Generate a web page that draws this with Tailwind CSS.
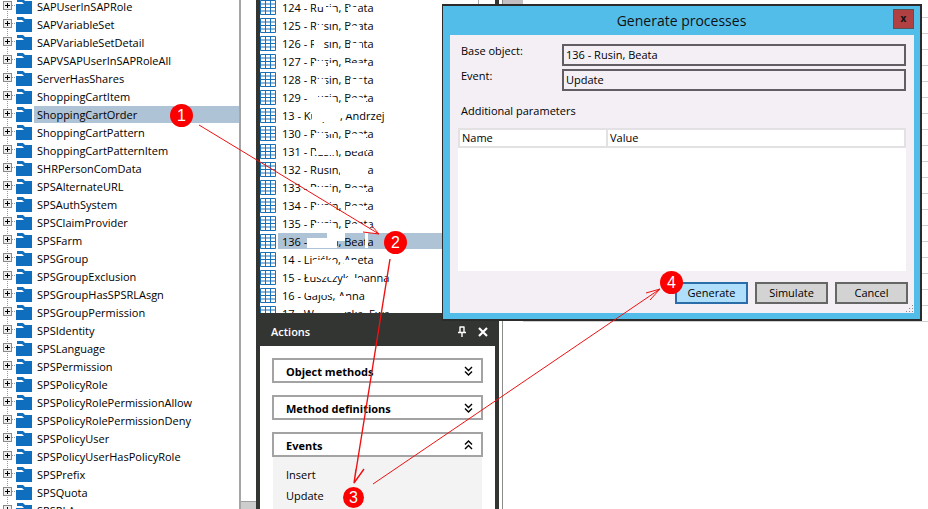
<!DOCTYPE html>
<html lang="en">
  <head>
    <meta charset="UTF-8" />
    <title>Generate processes</title>
    <script src="https://cdn.jsdelivr.net/npm/@tailwindcss/browser@4"></script>
  </head>
  <body class="bg-white overflow-hidden font-['Open_Sans',sans-serif] text-[11px] text-black">
    <div class="relative w-[928px] h-[509px] overflow-hidden flex">
      <!-- object tree -->
      <div class="w-[239px] h-full overflow-hidden bg-white shrink-0">
        <div id="tree" class="-mt-[3px]"></div>
      </div>
      <!-- tree scrollbar -->
      <div class="w-[17px] h-full shrink-0 flex flex-col justify-end border-l-2 border-[#a6a6a6]">
        <div class="h-[8px] bg-[#cdcdcd] border-t border-[#a0a0a0]"></div>
      </div>

      <!-- middle column -->
      <div class="w-[243px] h-full shrink-0 flex flex-col border-x-4 border-[#333532]">
        <div class="h-[313px] overflow-hidden bg-white">
          <div id="list" class="-mt-[2px]"></div>
        </div>
        <div class="flex-1 -mx-[4px] bg-[#333532] flex flex-col">
          <div class="h-[33px] shrink-0 flex items-center pt-[5px] pl-[15px] pr-[11px] text-white text-[11px]">
            <span class="flex-1 font-semibold">Actions</span>
            <svg width="10" height="12" viewBox="0 0 10 12" class="mr-[11px]"><path d="M2.500 1h5M3 1v5M7 1v5M1 6.500h8M5 7v4" stroke="#fff" stroke-width="1.400" fill="none" /></svg>
            <svg width="10" height="10" viewBox="0 0 10 10"><path d="M1 1l8 8M9 1l-8 8" stroke="#fff" stroke-width="2.200" /></svg>
          </div>
          <div class="flex-1 mx-[4px] bg-white px-[12px] pt-[12px] flex flex-col gap-[12px]">
            <div class="h-[25px] shrink-0 border-2 border-[#a3a3a3] flex items-center justify-between pl-[12px] pr-[8px] font-bold">
              <span class="pt-[3px]">Object methods</span>
              <svg width="9" height="10" viewBox="0 0 9 10"><path d="M1 1l3.500 3.500L8 1M1 5.500L4.500 9 8 5.500" stroke="#000" stroke-width="1.400" fill="none" /></svg>
            </div>
            <div class="h-[25px] shrink-0 border-2 border-[#a3a3a3] flex items-center justify-between pl-[12px] pr-[8px] font-bold">
              <span class="pt-[3px]">Method definitions</span>
              <svg width="9" height="10" viewBox="0 0 9 10"><path d="M1 1l3.500 3.500L8 1M1 5.500L4.500 9 8 5.500" stroke="#000" stroke-width="1.400" fill="none" /></svg>
            </div>
            <div class="flex-1 flex flex-col">
              <div class="h-[25px] shrink-0 border-2 border-[#a3a3a3] flex items-center justify-between pl-[12px] pr-[8px] font-bold">
                <span class="pt-[3px]">Events</span>
                <svg width="9" height="10" viewBox="0 0 9 10"><path d="M1 4.500L4.500 1 8 4.500M1 9l3.500-3.500L8 9" stroke="#000" stroke-width="1.400" fill="none" /></svg>
              </div>
              <div class="flex-1 mx-[1px] bg-[#f3f3f3] pl-[13px] pt-[10px] flex flex-col gap-[5px]">
                <span class="h-[16px] leading-[16px]">Insert</span>
                <span class="h-[16px] leading-[16px]">Update</span>
              </div>
            </div>
          </div>
        </div>
      </div>

      <!-- detail pane behind the dialog -->
      <div class="flex-1 h-full border-l-[1px] ml-[3px] border-[#8c8c8c] bg-white">
        <div class="flex h-[320px]">
          <div class="w-[20px] h-[4px] bg-[#c2bec2]"></div>
          <div id="grid" class="flex-1 flex flex-col pt-[2px]"></div>
        </div>
      </div>
      <div class="absolute left-[478px] top-0 w-px h-[4px] bg-[#aaaaaa]"></div>

      <!-- dialog -->
      <div class="absolute left-[442px] top-[4px] w-[480px] h-[317px] bg-[#53bdea] border border-[#2b2b2b] border-t-2 border-r-2 border-b-2 flex flex-col">
        <div class="h-[29px] shrink-0 relative flex items-center justify-center text-[14px] text-[#111]">
          <span>Generate processes</span>
          <div class="absolute right-[6px] top-[3px] w-[21px] h-[20px] bg-[#b04042] border border-[#555] flex items-center justify-center text-[10px] font-bold leading-none pb-[2px]">x</div>
        </div>
        <div class="flex-1 ml-[7px] mr-[6px] mb-[6px] bg-[#f3eff5] relative flex flex-col pl-[8px] pr-[8px] pt-[9px]">
          <div class="flex h-[22px] mb-[3px] pl-[3px]">
            <span class="w-[101px] leading-[14px]">Base object:</span>
            <div class="flex-1 border-2 border-[#625d65] pl-[2px] flex items-center">136 - Rusin, Beata</div>
          </div>
          <div class="flex h-[22px] pl-[3px]">
            <span class="w-[101px] leading-[14px]">Event:</span>
            <div class="flex-1 border-2 border-[#625d65] pl-[2px] flex items-center">Update</div>
          </div>
          <div class="pl-[3px] mt-[12px] h-[16px] leading-[16px]">Additional parameters</div>
          <div class="mt-[9px] h-[143px] bg-white flex flex-col">
            <div class="h-[20px] shrink-0 flex border-2 border-[#e3e1e4]">
              <span class="w-[148px] pl-[2px] border-r-2 border-[#e3e1e4] leading-[15px]">Name</span>
              <span class="pl-[2px] leading-[15px]">Value</span>
            </div>
          </div>
          <div class="flex justify-end gap-[7px] mt-[11px] -mr-[2px]">
            <div class="w-[73px] h-[22px] bg-[#b0dffb] border-2 border-[#2a6da8] flex items-center justify-center">Generate</div>
            <div class="w-[73px] h-[22px] bg-[#d3d3d3] border-2 border-[#666] flex items-center justify-center">Simulate</div>
            <div class="w-[73px] h-[22px] bg-[#d3d3d3] border-2 border-[#666] flex items-center justify-center">Cancel</div>
          </div>
          <svg width="8" height="8" viewBox="0 0 8 8" class="absolute right-0 bottom-0"><path d="M6 0h1v1H6zM3 3h1v1H3zM6 3h1v1H6zM0 6h1v1H0zM3 6h1v1H3zM6 6h1v1H6z" fill="#8a8a8a" /></svg>
        </div>
      </div>

      <!-- numbered callouts drawn over the screenshot -->
      <svg width="928" height="509" viewBox="0 0 928 509" class="absolute left-0 top-0 pointer-events-none">
        <g stroke="#ee1111" stroke-width="1" fill="none">
          <path d="M199 125L379 234M372 226L379 234L363 232" />
          <path d="M390 259L354 483M356 469L354 483L364 469" stroke-width="1.400" />
          <path d="M373 484L660 289M646 293L660 289L650 300" />
        </g>
      </svg>
      <div class="absolute left-[170px] top-[104px] w-[23px] h-[23px] rounded-full bg-[#fa0000] text-white flex items-center justify-center font-['Liberation_Sans',sans-serif] text-[16px]">1</div>
      <div class="absolute left-[384px] top-[231px] w-[23px] h-[23px] rounded-full bg-[#fa0000] text-white flex items-center justify-center font-['Liberation_Sans',sans-serif] text-[16px]">2</div>
      <div class="absolute left-[343px] top-[487px] w-[21px] h-[21px] rounded-full bg-[#fa0000] text-white flex items-center justify-center font-['Liberation_Sans',sans-serif] text-[16px]">3</div>
      <div class="absolute left-[660px] top-[271px] w-[23px] h-[23px] rounded-full bg-[#fa0000] text-white flex items-center justify-center font-['Liberation_Sans',sans-serif] text-[16px]">4</div>
    </div>

    <script>
      const treeItems = ["SAPUserInSAPRole","SAPVariableSet","SAPVariableSetDetail","SAPVSAPUserInSAPRoleAll","ServerHasShares","ShoppingCartItem","ShoppingCartOrder","ShoppingCartPattern","ShoppingCartPatternItem","SHRPersonComData","SPSAlternateURL","SPSAuthSystem","SPSClaimProvider","SPSFarm","SPSGroup","SPSGroupExclusion","SPSGroupHasSPSRLAsgn","SPSGroupPermission","SPSIdentity","SPSLanguage","SPSPermission","SPSPolicyRole","SPSPolicyRolePermissionAllow","SPSPolicyRolePermissionDeny","SPSPolicyUser","SPSPolicyUserHasPolicyRole","SPSPrefix","SPSQuota","SPSRLA"];
      const expander = '<svg width="16" height="18" viewBox="0 0 16 18" class="shrink-0"><path d="M7.500 0V18M12 8.500H16" stroke="#999" stroke-dasharray="1 1" /><rect x="3.500" y="4.500" width="8" height="8" fill="#eee" stroke="#8a8a8a" /><path d="M5 8.500h5M7.500 6v5" stroke="#000" /></svg>';
      const folder = '<svg width="16" height="15" viewBox="0 0 16 15" class="shrink-0"><path d="M1 0h6l2 2h7v3H8L6 3H1z" fill="#0f6fbe" /><path d="M0 5h16v10H0z" fill="#0f6fbe" /></svg>';
      document.getElementById("tree").innerHTML = treeItems.map((name) => {
        const selected = name === "ShoppingCartOrder";
        return '<div class="h-[18px] flex items-center">' + expander + folder +
          '<span class="ml-[2px] flex-1 h-[17px] pl-[3px] leading-[17px] whitespace-nowrap ' + (selected ? 'bg-[#afc3d7]' : '') + '">' + name + '</span></div>';
      }).join("");

      // [number, masks] - the names are partly blanked out in the source picture
      const listRows = [
        ["124", [[38,3,10,5],[46,8,12,7],[70,8,10,7]]],
        ["125", [[38,8,8,7],[50,3,8,4],[70,9,12,6]]],
        ["126", [[36,3,10,12],[48,3,8,4],[72,8,12,7]]],
        ["127", [[36,8,12,7],[50,10,8,6],[66,10,24,5]]],
        ["128", [[38,8,10,7],[72,8,14,7]]],
        ["129", [[30,8,28,7],[32,3,8,5],[70,9,18,6]]],
        ["13", [[34,3,28,12],[66,3,12,4]]],
        ["130", [[36,8,12,7],[50,3,6,6],[70,9,18,6]]],
        ["131", [[34,8,24,4],[38,3,20,5],[66,3,22,5]]],
        ["132", [[44,3,14,4],[62,3,28,12]]],
        ["133", [[32,8,22,7],[66,9,22,6]]],
        ["134", [[36,8,20,7],[68,9,20,6]]],
        ["135", [[36,8,20,7],[70,9,22,6]]],
        ["136", [[29,5,30,10],[49,-1,18,9],[87,0,3,15]]],
        ["14", [[34,9,24,6],[66,9,14,6]]],
        ["15", [[30,3,28,5],[64,9,20,6]]],
        ["16", [[28,3,24,5],[60,9,10,4]]],
        ["17", [[36,3,30,12]]],
      ];
      const names = { "13": "13 - Kurpas, Andrzej", "14": "14 - Lisiśko, Aneta", "15": "15 - Łuszczyk, Joanna", "16": "16 - Gajos, Anna", "17": "17 - Wiśniewska, Ewa" };
      const tableIcon = '<svg width="16" height="16" viewBox="0 0 16 16" class="shrink-0"><path d="M.5 1.500h15v14H.5zM.5 5h15M.5 8.500h15M.5 12h15M5.500 1.500v14M10.500 1.500v14" fill="#fff" stroke="#1a71b8" /></svg>';
      document.getElementById("list").innerHTML = listRows.map(([num, masks]) => {
        const selected = num === "136";
        const label = names[num] || num + " - Rusin, Beata";
        const blanks = masks.map((m) => '<i class="absolute bg-white" style="left:' + m[0] + 'px;top:' + m[1] + 'px;width:' + m[2] + 'px;height:' + m[3] + 'px"></i>').join("");
        return '<div class="h-[18px] flex items-center">' + tableIcon +
          '<span class="relative ml-[2px] flex-1 h-[16px] pl-[4px] leading-[18px] whitespace-nowrap ' + (selected ? 'bg-[#afc3d7]' : '') + '">' + label + blanks + '</span></div>';
      }).join("");

      document.getElementById("grid").innerHTML = Array.from({ length: 20 }, () => '<div class="h-[16px] shrink-0 border-b border-[#d0d0d0]"></div>').join("");
    </script>
  </body>
</html>
